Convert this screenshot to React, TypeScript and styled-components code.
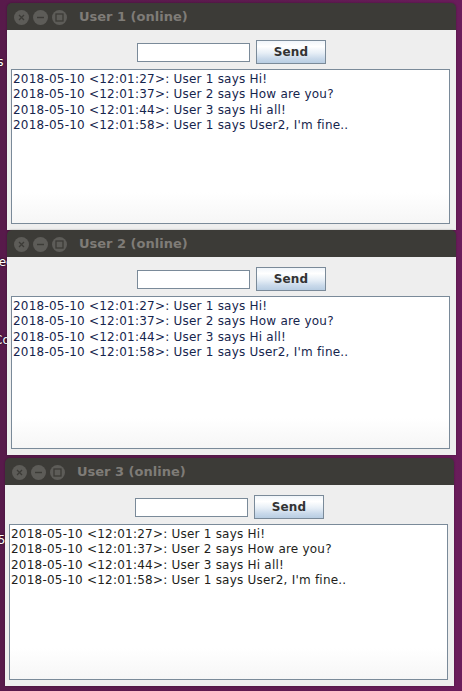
import React from "react";
import styled, { createGlobalStyle } from "styled-components";

const Global = createGlobalStyle`
  html, body { margin: 0; padding: 0; }
  body {
    width: 462px;
    height: 691px;
    overflow: hidden;
    background: linear-gradient(to right, #581a4b 0%, #5e1b50 60%, #6a1c5b 100%);
    font-family: "DejaVu Sans", "Liberation Sans", sans-serif;
  }
`;

const Desktop = styled.div`
  position: relative;
  width: 462px;
  height: 691px;
  overflow: hidden;
`;

const Stack = styled.div`
  position: relative;
  z-index: 1;
  display: flex;
  flex-direction: column;
  padding-top: 3px;
`;

const DeskLabel = styled.div<{ $top: number }>`
  position: absolute;
  left: -6px;
  top: ${(p) => p.$top}px;
  font-size: 12px;
  color: #ffffff;
  text-shadow: 0 0 2px #000;
  z-index: 0;
`;

const Window = styled.div<{ $left: number; $height: number; $gap: number }>`
  margin-left: ${(p) => p.$left}px;
  margin-top: ${(p) => p.$gap}px;
  width: 449px;
  height: ${(p) => p.$height}px;
  display: flex;
  flex-direction: column;
  box-shadow: 0 0 2px rgba(0, 0, 0, 0.35);
  border-radius: 5px 5px 0 0;
`;

const TitleBar = styled.div`
  height: 27px;
  flex: none;
  display: flex;
  align-items: center;
  padding-left: 7px;
  background: #3c3b37;
  border-radius: 5px 5px 0 0;
`;

const Controls = styled.div`
  display: flex;
  gap: 4px;
  margin-top: 1px;
`;

const Ctrl = styled.div`
  width: 15px;
  height: 15px;
  border-radius: 50%;
  background: #5d5c58;
  display: flex;
  align-items: center;
  justify-content: center;
`;

const Title = styled.div`
  margin-left: 12px;
  font-size: 13px;
  font-weight: bold;
  color: #7f7c77;
  white-space: nowrap;
`;

const Content = styled.div`
  flex: 1;
  min-height: 0;
  display: flex;
  flex-direction: column;
  background: #eeeeee;
  padding: 10px 6px 6px 4px;
`;

const InputRow = styled.div`
  display: flex;
  justify-content: center;
  align-items: center;
  gap: 6px;
  height: 24px;
  flex: none;
  padding-left: 2px;
`;

const Field = styled.div`
  width: 111px;
  height: 17px;
  background: #ffffff;
  border: 1px solid #7a8a99;
`;

const SendButton = styled.div`
  width: 68px;
  height: 22px;
  border: 1px solid #7a8a99;
  background: linear-gradient(
    to bottom,
    #f0f5fa 0%,
    #ffffff 25%,
    #e6eef6 55%,
    #c9d9ea 80%,
    #b8cde2 100%
  );
  display: flex;
  align-items: center;
  justify-content: center;
  font-size: 12px;
  font-weight: bold;
  color: #333333;
  letter-spacing: 0.2px;
`;

const TextArea = styled.div<{ $ink: string }>`
  margin-top: 5px;
  flex: 1;
  min-height: 0;
  border: 1px solid #7a8a99;
  background: linear-gradient(to bottom, #ffffff 0%, #ffffff 80%, #f6f6f6 100%);
  padding: 2px 1px;
  font-size: 12px;
  letter-spacing: 0.22px;
  line-height: 15.3px;
  color: ${(p) => p.$ink};
  white-space: nowrap;
  overflow: hidden;
`;

const Line = styled.div``;

const CloseIcon = () => (
  <svg width="7" height="7" viewBox="0 0 7 7">
    <path d="M1 1 L6 6 M6 1 L1 6" stroke="#3c3b37" strokeWidth="1.3" />
  </svg>
);
const MinIcon = () => (
  <svg width="9" height="9" viewBox="0 0 9 9">
    <path d="M1 4.5 H8" stroke="#3c3b37" strokeWidth="1.4" />
  </svg>
);
const MaxIcon = () => (
  <svg width="9" height="9" viewBox="0 0 9 9">
    <rect x="1" y="1" width="7" height="7" fill="none" stroke="#3c3b37" strokeWidth="1.3" />
  </svg>
);

const messages = [
  "2018-05-10 <12:01:27>: User 1 says Hi!",
  "2018-05-10 <12:01:37>: User 2 says How are you?",
  "2018-05-10 <12:01:44>: User 3 says Hi all!",
  "2018-05-10 <12:01:58>: User 1 says User2, I'm fine..",
];

type ChatProps = { name: string; left: number; height: number; gap: number; ink: string };

const ChatWindow = ({ name, left, height, gap, ink }: ChatProps) => (
  <Window $left={left} $height={height} $gap={gap}>
    <TitleBar>
      <Controls>
        <Ctrl><CloseIcon /></Ctrl>
        <Ctrl><MinIcon /></Ctrl>
        <Ctrl><MaxIcon /></Ctrl>
      </Controls>
      <Title>{name} (online)</Title>
    </TitleBar>
    <Content>
      <InputRow>
        <Field />
        <SendButton>Send</SendButton>
      </InputRow>
      <TextArea $ink={ink}>
        {messages.map((m) => (
          <Line key={m}>{m}</Line>
        ))}
      </TextArea>
    </Content>
  </Window>
);

export default function App() {
  return (
    <Desktop>
      <Global />
      <DeskLabel $top={55}>is</DeskLabel>
      <DeskLabel $top={255}>ree</DeskLabel>
      <DeskLabel $top={333}>Co</DeskLabel>
      <DeskLabel $top={533}>.5</DeskLabel>
      <Stack>
        <ChatWindow name="User 1" left={7} height={227} gap={0} ink="#16254d" />
        <ChatWindow name="User 2" left={7} height={225} gap={0} ink="#16254d" />
        <ChatWindow name="User 3" left={5} height={228} gap={3} ink="#221e1b" />
      </Stack>
    </Desktop>
  );
}
